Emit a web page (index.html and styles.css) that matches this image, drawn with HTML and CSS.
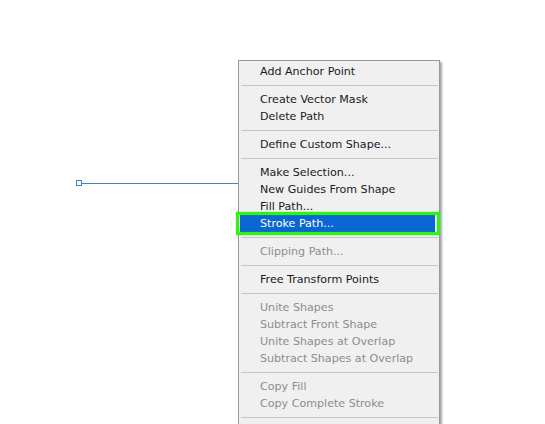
FILE: index.html
```html
<!DOCTYPE html>
<html>
<head lang="en">
    <meta charset="UTF-8">
    <title>Path Context Menu</title>
    <link rel="stylesheet" href="styles.css">
</head>
<body>
    <div id="canvas">
        <!-- path drawn on the canvas -->
        <svg class="path" width="240" height="20" viewBox="0 0 240 20">
            <rect x="76.5" y="3.5" width="5" height="5" fill="#fff" stroke="#3a84cc" stroke-width="1"/>
            <line x1="82" y1="6.5" x2="240" y2="6.5" stroke="#3a84cc" stroke-width="1"/>
        </svg>

        <ul id="menu">
            <li class="item">Add Anchor Point</li>
            <li class="sep"></li>
            <li class="item">Create Vector Mask</li>
            <li class="item">Delete Path</li>
            <li class="sep"></li>
            <li class="item">Define Custom Shape...</li>
            <li class="sep"></li>
            <li class="item">Make Selection...</li>
            <li class="item">New Guides From Shape</li>
            <li class="item">Fill Path...</li>
            <li class="item hot">Stroke Path...</li>
            <li class="sep"></li>
            <li class="item off">Clipping Path...</li>
            <li class="sep"></li>
            <li class="item">Free Transform Points</li>
            <li class="sep"></li>
            <li class="item off">Unite Shapes</li>
            <li class="item off">Subtract Front Shape</li>
            <li class="item off">Unite Shapes at Overlap</li>
            <li class="item off">Subtract Shapes at Overlap</li>
            <li class="sep"></li>
            <li class="item off">Copy Fill</li>
            <li class="item off">Copy Complete Stroke</li>
            <li class="sep"></li>
            <li class="item blank"></li>
        </ul>
    </div>
</body>
</html>
```

FILE: styles.css
```css
 *{
     margin: 0;
     padding: 0;
 }
 body{
     background: #fff;
     font-family: "DejaVu Sans", Verdana, sans-serif;
     overflow: hidden;
 }
 #canvas{
     width: 545px;
     height: 424px;
     position: relative;
     overflow: hidden;
 }
 .path{
     position: absolute;
     left: 0;
     top: 177px;
 }
 #menu{
     position: absolute;
     left: 238px;
     top: 60px;
     width: 200px;
     padding: 2px 0;
     list-style-type: none;
     background-color: #f0f0f0;
     border: 1px solid #979797;
     box-shadow: 2px 2px 2px rgba(0, 0, 0, 0.35);
 }
 #menu .item{
     height: 17px;
     line-height: 17px;
     padding-left: 21px;
     font-size: 11.1px;
     color: #1a1a1a;
     white-space: nowrap;
 }
 #menu .item.off{
     color: #8d8d8d;
 }
 #menu .item.hot{
     position: relative;
     margin: 0 4px 0 1px;
     padding-left: 20px;
     background-color: #0a66d2;
     color: #fff;
 }
 #menu .item.hot:after{
     content: "";
     position: absolute;
     left: -4px;
     right: -5px;
     top: -3px;
     bottom: -3px;
     border: 3px solid #2cf514;
     box-shadow: 0 0 1px #2cf514, inset 0 0 1px #2cf514;
 }
 #menu .sep{
     height: 11px;
     position: relative;
 }
 #menu .sep:after{
     content: "";
     position: absolute;
     left: 2px;
     right: 1px;
     top: 5px;
     border-top: 1px solid #c6c6c6;
 }
```
